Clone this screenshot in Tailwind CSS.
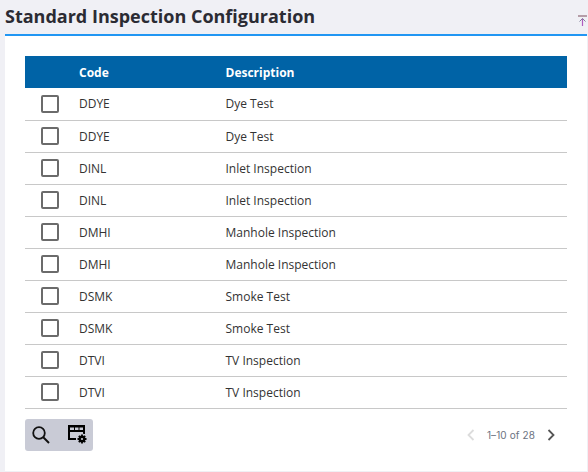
<!DOCTYPE html>
<html lang="en">
<head>
  <meta charset="UTF-8" />
  <title>Standard Inspection Configuration</title>
  <script src="https://cdn.jsdelivr.net/npm/@tailwindcss/browser@4"></script>
</head>
<body class="bg-[#f0f0f5] m-0 p-0 overflow-hidden font-['Open_Sans','Noto_Sans',sans-serif]">
  <div class="w-[588px] h-[472px] flex flex-col">
    <!-- header -->
    <div class="h-[36px] shrink-0 ml-[5px] mr-[1px] flex items-start justify-between border-b-2 border-[#2196f3]">
      <h1 class="mt-[4px] text-[18px] leading-[25px] font-bold text-[#2b2b33]">Standard Inspection Configuration</h1>
      <svg class="mt-[15px]" width="9" height="11" viewBox="0 0 9 11" fill="none">
        <path d="M0 1H9" stroke="#7a4a5a" stroke-width="1"/>
        <path d="M4.5 11V3.5" stroke="#b05cc0" stroke-width="1.2"/>
        <path d="M1.5 6.5L4.5 3.5L7.5 6.5" stroke="#7f7f9a" stroke-width="1"/>
      </svg>
    </div>

    <!-- panel -->
    <div class="ml-[5px] mr-[1px] h-[435px] bg-white pt-[20px] px-[20px]">
      <div class="h-[32px] pt-[1px] bg-[#0063a6] flex items-center text-white text-[12px] font-bold">
        <span class="ml-[54px] w-[146.5px]">Code</span>
        <span>Description</span>
      </div>

      <div class="h-[33px] pb-[1px] border-b border-[#c8c8c8] flex items-center text-[12px] text-[#333]">
        <span class="ml-[16px] w-[18px] h-[18px] border-2 border-[#6b6b6b] rounded-[2px]"></span>
        <span class="ml-[20px] w-[146.5px]">DDYE</span><span>Dye Test</span>
      </div>
      <div class="h-[32px] border-b border-[#c8c8c8] flex items-center text-[12px] text-[#333]">
        <span class="ml-[16px] mb-[1px] w-[18px] h-[18px] border-2 border-[#6b6b6b] rounded-[2px]"></span>
        <span class="ml-[20px] w-[146.5px]">DDYE</span><span>Dye Test</span>
      </div>
      <div class="h-[32px] border-b border-[#c8c8c8] flex items-center text-[12px] text-[#333]">
        <span class="ml-[16px] mb-[1px] w-[18px] h-[18px] border-2 border-[#6b6b6b] rounded-[2px]"></span>
        <span class="ml-[20px] w-[146.5px]">DINL</span><span>Inlet Inspection</span>
      </div>
      <div class="h-[32px] border-b border-[#c8c8c8] flex items-center text-[12px] text-[#333]">
        <span class="ml-[16px] mb-[1px] w-[18px] h-[18px] border-2 border-[#6b6b6b] rounded-[2px]"></span>
        <span class="ml-[20px] w-[146.5px]">DINL</span><span>Inlet Inspection</span>
      </div>
      <div class="h-[32px] border-b border-[#c8c8c8] flex items-center text-[12px] text-[#333]">
        <span class="ml-[16px] mb-[1px] w-[18px] h-[18px] border-2 border-[#6b6b6b] rounded-[2px]"></span>
        <span class="ml-[20px] w-[146.5px]">DMHI</span><span>Manhole Inspection</span>
      </div>
      <div class="h-[32px] border-b border-[#c8c8c8] flex items-center text-[12px] text-[#333]">
        <span class="ml-[16px] mb-[1px] w-[18px] h-[18px] border-2 border-[#6b6b6b] rounded-[2px]"></span>
        <span class="ml-[20px] w-[146.5px]">DMHI</span><span>Manhole Inspection</span>
      </div>
      <div class="h-[32px] border-b border-[#c8c8c8] flex items-center text-[12px] text-[#333]">
        <span class="ml-[16px] mb-[1px] w-[18px] h-[18px] border-2 border-[#6b6b6b] rounded-[2px]"></span>
        <span class="ml-[20px] w-[146.5px]">DSMK</span><span>Smoke Test</span>
      </div>
      <div class="h-[32px] border-b border-[#c8c8c8] flex items-center text-[12px] text-[#333]">
        <span class="ml-[16px] mb-[1px] w-[18px] h-[18px] border-2 border-[#6b6b6b] rounded-[2px]"></span>
        <span class="ml-[20px] w-[146.5px]">DSMK</span><span>Smoke Test</span>
      </div>
      <div class="h-[32px] border-b border-[#c8c8c8] flex items-center text-[12px] text-[#333]">
        <span class="ml-[16px] mb-[1px] w-[18px] h-[18px] border-2 border-[#6b6b6b] rounded-[2px]"></span>
        <span class="ml-[20px] w-[146.5px]">DTVI</span><span>TV Inspection</span>
      </div>
      <div class="h-[32px] border-b border-[#c8c8c8] flex items-center text-[12px] text-[#333]">
        <span class="ml-[16px] mb-[1px] w-[18px] h-[18px] border-2 border-[#6b6b6b] rounded-[2px]"></span>
        <span class="ml-[20px] w-[146.5px]">DTVI</span><span>TV Inspection</span>
      </div>

      <!-- footer -->
      <div class="mt-[10px] h-[32px] flex items-center justify-between">
        <div class="w-[68px] h-[32px] bg-[#c9cbd6] rounded-[3px] flex items-center">
          <svg class="ml-[7px] mb-[1px]" width="18" height="18" viewBox="0 0 18 18" fill="none">
            <circle cx="7" cy="7" r="5.8" stroke="#111" stroke-width="1.8"/>
            <path d="M11 11L17 17" stroke="#111" stroke-width="2"/>
          </svg>
          <svg class="ml-[18px] mb-[1px]" width="19" height="19" viewBox="0 0 19 19">
            <path fill="#000" fill-rule="evenodd" d="M0 0H17V9H15V7H2V13H8V15H0ZM2 2.5V5H6V2.5ZM7 2.5V5H10.5V2.5ZM11.5 2.5V5H15V2.5Z"/>
            <circle cx="14" cy="14" r="5.5" fill="#c9cbd6"/>
            <path d="M14 9.5V18.5M9.5 14H18.5M10.8 10.8L17.2 17.2M17.2 10.8L10.8 17.2" stroke="#000" stroke-width="1.8"/>
            <circle cx="14" cy="14" r="3.4" fill="#000"/>
            <circle cx="14" cy="14" r="1.1" fill="#c9cbd6"/>
          </svg>
        </div>
        <div class="flex items-center">
          <svg width="8" height="12" viewBox="0 0 8 12" fill="none"><path d="M6.5 1L1.5 6L6.5 11" stroke="#dcdcdc" stroke-width="1.8"/></svg>
          <span class="ml-[12px] text-[10px] tracking-[0.1px] text-[#6b7280] font-['Inter','Roboto',sans-serif]">1–10 of 28</span>
          <svg class="ml-[12px] mr-[12px]" width="8" height="12" viewBox="0 0 8 12" fill="none"><path d="M1.5 1L6.5 6L1.5 11" stroke="#555" stroke-width="1.8"/></svg>
        </div>
      </div>
    </div>
  </div>
</body>
</html>
